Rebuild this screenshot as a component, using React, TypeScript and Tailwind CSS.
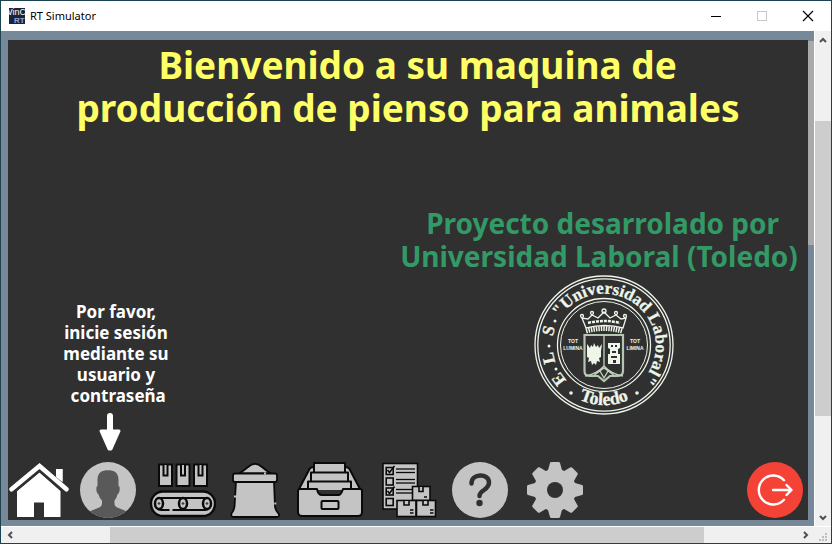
import React from "react";

const GREY = "#c4c4c4";
const INK = "#0a0a0a";

function WindowIcon() {
  return (
    <svg className="h-4 w-4 shrink-0" viewBox="0 0 16 16" aria-hidden="true">
      <rect width="16" height="16" fill="#1d2438" />
      <text x="-5" y="7" fontSize="9" fontFamily="Liberation Sans, sans-serif" fill="#fff">WinC</text>
      <text x="5" y="15" fontSize="8" fontFamily="Liberation Sans, sans-serif" fontWeight="700" fill="#8fa5dc">RT</text>
    </svg>
  );
}

function TitleBar() {
  const control = "flex h-full w-[46px] items-center justify-center";
  return (
    <header className="flex h-[30px] shrink-0 items-center bg-white pl-2">
      <WindowIcon />
      <span className="ml-[5px] grow font-['Noto_Sans',sans-serif] text-[11px] text-black">RT Simulator</span>
      <button type="button" aria-label="Minimizar" className={control}>
        <svg className="h-3 w-3" viewBox="0 0 12 12" stroke="#000" shapeRendering="crispEdges"><path d="M1 6.5h10" /></svg>
      </button>
      <button type="button" aria-label="Maximizar" className={control} disabled>
        <svg className="h-3 w-3" viewBox="0 0 12 12" stroke="#c8c8c8" fill="none" shapeRendering="crispEdges"><rect x="1.5" y="1.5" width="9" height="9" /></svg>
      </button>
      <button type="button" aria-label="Cerrar" className={control}>
        <svg className="h-3 w-3" viewBox="0 0 12 12" stroke="#000" strokeWidth="1.2"><path d="M1 1l10 10M11 1L1 11" /></svg>
      </button>
    </header>
  );
}

function Chevron({ d }: { d: string }) {
  return (
    <svg className="h-2 w-2" viewBox="0 0 8 8" fill="none" stroke="#505050" strokeWidth="2" aria-hidden="true">
      <path d={d} />
    </svg>
  );
}

function VerticalScroll() {
  return (
    <div className="flex w-[17px] shrink-0 flex-col border-l border-white bg-[#f0f0f0]">
      <button type="button" aria-label="Subir" className="flex h-[18px] items-center justify-center"><Chevron d="M1 6l3-3 3 3" /></button>
      <div className="grow-[72]" />
      <div className="grow-[295] bg-[#cdcdcd]" />
      <div className="grow-[93]" />
      <button type="button" aria-label="Bajar" className="flex h-[17px] items-center justify-center"><Chevron d="M1 2l3 3 3-3" /></button>
    </div>
  );
}

function HorizontalScroll() {
  return (
    <div className="flex h-[17px] shrink-0 border-t border-white bg-[#f0f0f0]">
      <button type="button" aria-label="Izquierda" className="flex w-[17px] items-center justify-center"><Chevron d="M6 1L3 4l3 3" /></button>
      <div className="grow-[92]" />
      <div className="grow-[594] bg-[#cdcdcd]" />
      <div className="grow-[93]" />
      <button type="button" aria-label="Derecha" className="flex w-[17px] items-center justify-center"><Chevron d="M2 1l3 3-3 3" /></button>
      <svg className="h-4 w-[17px]" viewBox="0 0 17 16" fill="#bfbfbf" aria-hidden="true">
        <path d="M11 6h2v2h-2zM8 9h2v2H8zM11 9h2v2h-2zM5 12h2v2H5zM8 12h2v2H8zM11 12h2v2h-2z" />
      </svg>
    </div>
  );
}

function Seal() {
  return (
    <svg className="h-[140px] w-[140px]" viewBox="0 0 140 140" fill="none" stroke="#eef6ea" role="img" aria-label="Escudo de la Universidad Laboral">
      <defs>
        <path id="sealUniversity" d="M26.200 42.400A52 52 0 1 1 108 106" />
        <path id="sealCity" d="M18 100A60 60 0 0 0 122 100" />
      </defs>
      <circle cx="70" cy="70" r="69" strokeWidth="1.3" />
      <circle cx="70" cy="70" r="66.2" strokeWidth="1.3" />
      <circle cx="70" cy="70" r="46.5" strokeWidth="1.3" />
      <circle cx="70" cy="70" r="43.5" strokeWidth="1" />
      <g fill="#eef6ea" strokeWidth=".3" fontFamily="Liberation Serif, serif" fontWeight="700">
        <text fontSize="17" transform="translate(29 101) rotate(-127)" textAnchor="middle">E</text>
        <text fontSize="17" transform="translate(20 82) rotate(-103)" textAnchor="middle">L</text>
        <text fontSize="17" transform="translate(20 57) rotate(-76)" textAnchor="middle">S</text>
        <text fontSize="17"><textPath href="#sealUniversity">"Universidad Laboral"</textPath></text>
        <text fontSize="18"><textPath href="#sealCity" startOffset="50%" textAnchor="middle">Toledo</textPath></text>
      </g>
      <g fill="#eef6ea" stroke="none">
        <circle cx="22" cy="94" r="1.500" /><circle cx="15" cy="71" r="1.500" /><circle cx="21" cy="46" r="1.500" />
        <circle cx="37" cy="118" r="1.8" /><circle cx="103" cy="118" r="1.8" />
      </g>
      <g fill="#eef6ea" stroke="none" fontFamily="Liberation Sans, sans-serif" fontWeight="700" fontSize="5" textAnchor="middle">
        <text x="39" y="68">TOT</text><text x="39" y="75">LUMINA</text>
        <text x="101" y="68">TOT</text><text x="101" y="75">LIMINA</text>
      </g>
      <g strokeWidth="1.3">
        <path d="M52 53L48 43l6 1 4-4 6 3 6-6 6 6 6-3 5 4 5-1-3 10q-18-5-37 0Z" />
        <path d="M54 48q16-4 32 0" strokeWidth="2.500" strokeDasharray="3 1" />
        <circle cx="70" cy="36" r="2" /><circle cx="58" cy="38" r="1.500" /><circle cx="82" cy="38" r="1.500" /><circle cx="48" cy="41" r="1.500" /><circle cx="91" cy="41" r="1.500" />
        <path d="M52 56q18-5 36 0" strokeWidth="5" strokeDasharray="1.500 1" />
        <path d="M50.500 60H89v36q0 5-6 5H76l-6 5-6-5H56q-5.500 0-5.500-5Z" stroke="#b4c6b0" strokeWidth="2.200" />
        <path d="M70 60v32M51 101q12-2 19-10q7 8 19 10M59 101l11-8 11 8M66 96l4 7 4-7" stroke="#c2d1be" />
      </g>
      <g fill="#eef6ea" stroke="none">
        <path d="M53 69l3 4 1-3 2 2 1-4 2 4 2-2 1 3 3-4-1 7v6l-2 1 1 4-3-1-1 4-2-2-2 2-1-4-3 1 1-4-2-1v-6Z" />
        <path d="M74 68h12v5l-2 1v5h2v10H74V79h2v-5l-2-1Zm3 2v2h2v-2Zm4 0v2h2v-2Zm-3 6v2h4v-2Zm-1 5v2h6v-2Zm2 4v3h3v-3Z" fillRule="evenodd" />
      </g>
    </svg>
  );
}

function HomeIcon() {
  return (
    <svg className="h-14 w-[62px]" viewBox="8 462 62 56" fill="#fff">
      <path d="M17 491l22.500-18.500L60.500 491v26H44v-14.500H34V517H17Z" />
      <path d="M56 469h6.500v13L56 477Z" />
      <path d="M11.500 490.500L39.500 467 66.500 490.500" fill="none" stroke="#303030" strokeWidth="8" />
      <path d="M56 469h6.500v13L56 477Z" />
      <path d="M11.500 489.200L39.500 466 66.500 489.200" fill="none" stroke="#fff" strokeWidth="4.600" strokeLinecap="round" />
    </svg>
  );
}

function UserIcon() {
  return (
    <svg className="h-14 w-14" viewBox="0 0 56 56">
      <clipPath id="avatar"><circle cx="28" cy="28" r="28" /></clipPath>
      <circle cx="28" cy="28" r="28" fill={GREY} />
      <path clipPath="url(#avatar)" fill="#595959" d="M17.500 18C17.500 10 22 8.200 28 8.200S38.500 10 38.500 18v6q1.800 0 1 5-.6 3-2 3.500-1 4-3 6v3q0 3 4 4.500l10 4V57H8v-7l10-4q4-1.500 4-4.500v-3q-2.500-2-3.500-6-1.500-.5-2-3.500-.600-5 1-5Z" />
    </svg>
  );
}

function ConveyorIcon() {
  return (
    <svg className="h-14 w-[74px]" viewBox="146 462 74 56" fill={GREY} stroke={INK} strokeWidth="2">
      {[159, 176.500, 194].map((x) => (
        <g key={x}>
          <rect x={x} y="464.500" width="13" height="21.500" />
          <path d={`M${x + 4.500} 465v10.500h4V465`} />
        </g>
      ))}
      <rect x="151" y="491.500" width="64" height="24.500" rx="12" strokeWidth="2.400" />
      <rect x="155" y="498" width="56" height="12" rx="6" />
      {[159, 183, 207].map((x) => (
        <g key={x}>
          <ellipse cx={x} cy="503.500" rx="4" ry="5.500" strokeWidth="2.500" />
          <circle cx={x} cy="503.500" r=".8" strokeWidth="1" />
        </g>
      ))}
      <path d="M169.500 510h3" stroke={GREY} strokeWidth="2.500" />
    </svg>
  );
}

function SackIcon() {
  return (
    <svg className="h-14 w-[51px]" viewBox="230 462 51 56" fill={GREY} stroke={INK} strokeWidth="1.800" strokeLinejoin="round">
      <path d="M239 473.500q5-3 9-6.500 7-6.500 14 0 4 3.500 9 6.500Z" />
      <path d="M236 481.500l-1.500 25q-.5 4-3 7-1 3 2 3.500h43q4-.5 2-3.500-3-3-3.500-7l-1-25Z" />
      <rect x="233" y="473.500" width="44" height="8.500" rx="2" />
      <path d="M264 473.500h2M235 495.500v2M275.300 502.500v2" stroke={GREY} strokeWidth="2" />
    </svg>
  );
}

function DrawerIcon() {
  return (
    <svg className="h-14 w-[77px]" viewBox="291 462 77 56" fill={GREY} stroke={INK} strokeWidth="2" strokeLinejoin="round">
      <path d="M299 489l10-19q1-3 5-3h31q4 0 5 3l10 19Z" />
      <path d="M314 472v-9h31v9" />
      <path d="M311 482v-9.500h37v9.500" />
      <path d="M308 490v-8.500h43v8.500" />
      <path d="M298 491q0-2 2-2h17q1 6 5 6h17q2 0 4-6h17q2 0 2 2v21q0 4-4 4h-56q-4 0-4-4Z" />
      <rect x="321.500" y="501" width="17" height="8" rx="1" />
    </svg>
  );
}

function ChecklistIcon() {
  return (
    <svg className="h-14 w-[62px]" viewBox="378 462 62 56" fill={GREY} stroke={INK} strokeWidth="1.600">
      <rect x="383" y="463.500" width="34.500" height="45.500" />
      {[467.500, 478, 488, 498.500].map((y) => (
        <rect key={y} x="386.200" y={y} width="7" height="7" />
      ))}
      {[469, 472.500, 479.500, 483, 489.500, 493].map((y) => (
        <path key={y} d={`M396 ${y}h19`} strokeWidth="1.300" />
      ))}
      <path d="M387.500 470l2 2.500 5-6.500M387.500 491l2 2.500 5-7" fill="none" />
      <rect x="412.500" y="486.500" width="17.500" height="14" />
      <rect x="397" y="500.500" width="19" height="16" />
      <rect x="416.500" y="500.500" width="19" height="16" />
      <path d="M419 487v4.500h4V487M404 501v4h5v-4M423 501v4h5v-4" />
      <path d="M424 497h3M410 510h3.500M410 513h3.500M430 510h3.500M430 513h3.500" strokeWidth="1.300" />
    </svg>
  );
}

function HelpIcon() {
  return (
    <svg className="h-14 w-[60px]" viewBox="0 0 60 56">
      <circle cx="30" cy="28" r="28" fill={GREY} />
      <path d="M21.500 21.500C21.500 11 39 11 39 20.500q0 4-5 7.500-4.500 3-4.500 6" fill="none" stroke="#303030" strokeWidth="4.500" strokeLinecap="round" />
      <circle cx="29.500" cy="41" r="3.200" fill="#303030" />
    </svg>
  );
}

function GearIcon() {
  return (
    <svg className="h-14 w-[70px]" viewBox="-35 -28 70 56" fill={GREY}>
      <mask id="hub"><rect x="-35" y="-28" width="70" height="56" fill="#fff" /><circle r="8" fill="#000" /></mask>
      <g mask="url(#hub)">
        <circle r="21" />
        {[0, 45, 90, 135, 180, 225, 270, 315].map((a) => (
          <path key={a} transform={`rotate(${a})`} d="M-9-18L-7-20-5-27q.3-1 1.500-1h7q1.200 0 1.500 1L7-20l2 2Z" />
        ))}
      </g>
    </svg>
  );
}

function ExitIcon() {
  return (
    <svg className="h-14 w-14" viewBox="0 0 56 56" fill="none" stroke="#fff" strokeWidth="2.400" strokeLinecap="round" strokeLinejoin="round">
      <circle cx="28" cy="28" r="28" fill="#f44336" stroke="none" />
      <path d="M37 18.200A14.500 14.500 0 1 0 37 37.800M26 28h18M39.500 23l5 5-5 5" />
    </svg>
  );
}

const sections = [
  { label: "Inicio", Icon: HomeIcon },
  { label: "Usuario", Icon: UserIcon },
  { label: "Producción", Icon: ConveyorIcon },
  { label: "Pienso", Icon: SackIcon },
  { label: "Archivo", Icon: DrawerIcon },
  { label: "Pedidos", Icon: ChecklistIcon },
  { label: "Ayuda", Icon: HelpIcon },
  { label: "Ajustes", Icon: GearIcon },
];

export default function App() {
  return (
    <div className="flex h-screen flex-col border border-[#1c4350] bg-white">
      <TitleBar />
      <div className="flex min-h-0 grow">
        <div className="flex min-w-0 grow bg-[#778899]">
          <main className="mt-[9px] mb-1.5 ml-[7px] flex min-w-0 grow flex-col bg-[#303030] font-['Noto_Sans',sans-serif] font-bold">
            <h1 className="whitespace-pre pt-[3px] text-center text-[37px] leading-[43px] text-[#ffff66]">
              {"  Bienvenido a su maquina de\nproducción de pienso para animales"}
            </h1>
            <div className="flex min-h-0 grow items-end justify-between">
              <section className="flex w-[216px] flex-col items-center pb-2.5">
                <p className="whitespace-pre text-center text-[17px] leading-[21px] text-white">
                  {"Por favor,\ninicie sesión\nmediante su\nusuario y\n contraseña"}
                </p>
                <svg className="mt-1.5 mr-3 h-10 w-6" viewBox="0 0 24 40" fill="#fff" stroke="#fff" strokeLinejoin="round" aria-hidden="true">
                  <path d="M12 4v20" strokeWidth="6" strokeLinecap="round" />
                  <path d="M3 19h18l-8 18h-2Z" strokeWidth="3" />
                </svg>
              </section>
              <section className="flex w-[408px] flex-col items-center pb-[47px]">
                <h2 className="mb-0.5 whitespace-pre pr-2.5 text-center text-[28px] leading-[33px] text-[#339966]">
                  {" Proyecto desarrolado por\nUniversidad Laboral (Toledo)"}
                </h2>
                <Seal />
              </section>
            </div>
            <nav className="flex items-center gap-2.5 pb-0.5">
              {sections.map(({ label, Icon }) => (
                <button key={label} type="button" aria-label={label}><Icon /></button>
              ))}
              <button type="button" aria-label="Salir" className="mr-[5px] ml-auto"><ExitIcon /></button>
            </nav>
          </main>
          <div className="flex w-1.5 shrink-0 flex-col pt-2.5">
            <div className="h-[42%] bg-[#aaaaaa]" />
          </div>
        </div>
        <VerticalScroll />
      </div>
      <HorizontalScroll />
    </div>
  );
}
